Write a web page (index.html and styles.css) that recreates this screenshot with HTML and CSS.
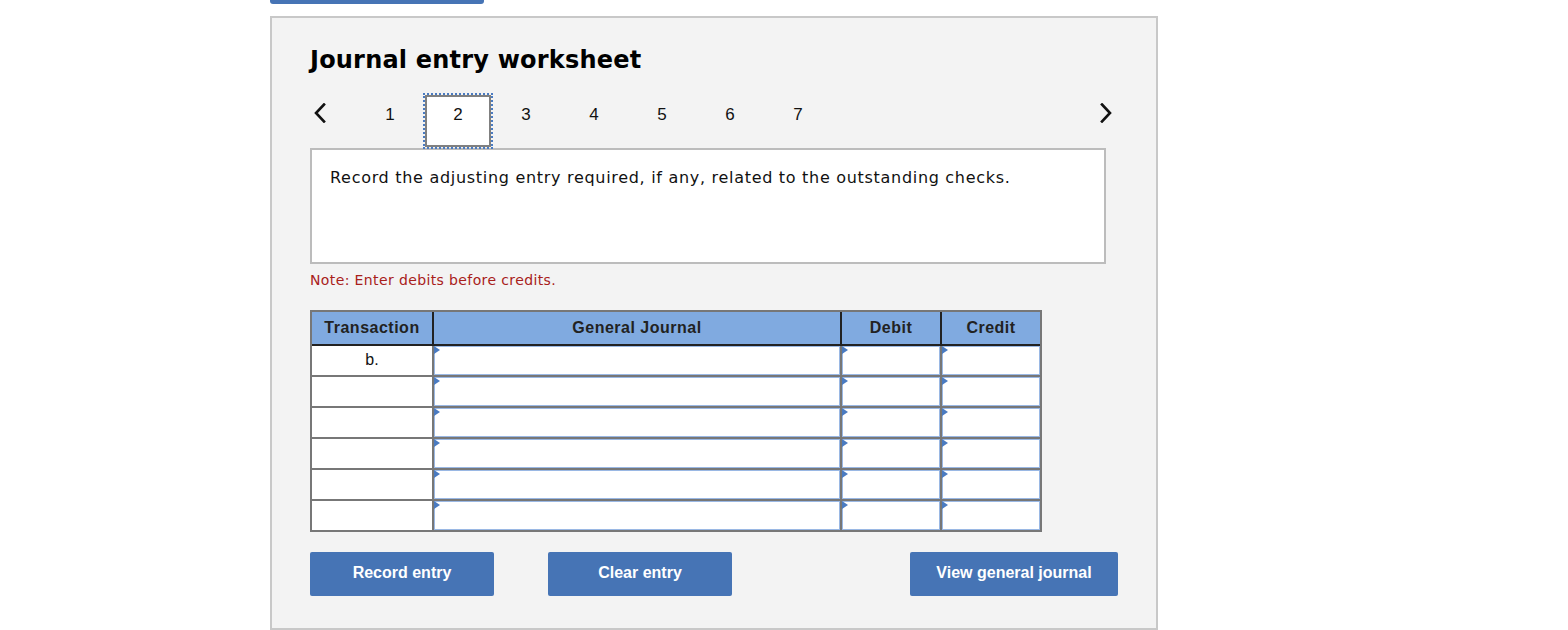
FILE: index.html
```html
<!DOCTYPE html>
<html>
<head>
<meta charset="utf-8">
<link rel="stylesheet" href="styles.css">
</head>
<body>
<div class="topbar"></div>
<div class="panel">
  <h1 class="title">Journal entry worksheet</h1>
  <div class="tabs">
    <div class="arrow prev">
      <svg width="12" height="20" viewBox="0 0 12 20"><polyline points="10,1.5 2,10 10,18.5" fill="none" stroke="#111" stroke-width="2.6" stroke-linecap="square"/></svg>
    </div>
    <div class="tab">1</div>
    <div class="tab active">2</div>
    <div class="tab">3</div>
    <div class="tab">4</div>
    <div class="tab">5</div>
    <div class="tab">6</div>
    <div class="tab">7</div>
    <div class="arrow next">
      <svg width="12" height="20" viewBox="0 0 12 20"><polyline points="2,1.5 10,10 2,18.5" fill="none" stroke="#111" stroke-width="2.6" stroke-linecap="square"/></svg>
    </div>
  </div>
  <div class="question">Record the adjusting entry required, if any, related to the outstanding checks.</div>
  <div class="note">Note: Enter debits before credits.</div>
  <div class="journal">
    <div class="head">
      <div class="hcell">Transaction</div>
      <div class="hcell">General Journal</div>
      <div class="hcell">Debit</div>
      <div class="hcell">Credit</div>
    </div>
    <div class="body">
      <div class="tcell">b.</div><div class="icell"></div><div class="icell"></div><div class="icell"></div>
      <div class="tcell"></div><div class="icell"></div><div class="icell"></div><div class="icell"></div>
      <div class="tcell"></div><div class="icell"></div><div class="icell"></div><div class="icell"></div>
      <div class="tcell"></div><div class="icell"></div><div class="icell"></div><div class="icell"></div>
      <div class="tcell"></div><div class="icell"></div><div class="icell"></div><div class="icell"></div>
      <div class="tcell"></div><div class="icell"></div><div class="icell"></div><div class="icell"></div>
    </div>
  </div>
  <div class="buttons">
    <button class="btn w184">Record entry</button>
    <button class="btn w184">Clear entry</button>
    <button class="btn w208 right">View general journal</button>
  </div>
</div>
</body>
</html>
```

FILE: styles.css
```css
html, body {
  margin: 0;
  padding: 0;
  background: #ffffff;
}
body {
  font-family: "DejaVu Sans", Verdana, sans-serif;
  color: #000;
  overflow: hidden;
}
.topbar {
  margin-left: 270px;
  width: 214px;
  height: 4px;
  background: #4674b5;
  border-radius: 0 0 3px 3px;
}
.panel {
  margin-top: 12px;
  margin-left: 270px;
  border: 2px solid #c8c8c8;
  background: #f3f3f3;
  padding: 28px 0 0 38px;
  box-sizing: border-box;
  width: 888px;
  height: 614px;
}
.title {
  margin: 0 0 18px 0;
  font-size: 24px;
  line-height: 29px;
  font-weight: bold;
  letter-spacing: 0.2px;
}
.tabs {
  display: flex;
  align-items: flex-start;
  height: 56px;
  width: 796px;
}
.arrow {
  display: flex;
  align-items: center;
  height: 20px;
  margin-top: 10px;
}
.arrow.prev {
  width: 46px;
  padding-left: 4px;
  box-sizing: border-box;
}
.arrow.next {
  margin-left: auto;
  margin-right: -6px;
}
.tab {
  width: 68px;
  padding-top: 11px;
  text-align: center;
  font-family: "Liberation Sans", Arial, sans-serif;
  font-size: 17px;
  line-height: 21px;
  color: #111;
}
.tab.active {
  position: relative;
  z-index: 1;
  box-sizing: border-box;
  width: 66px;
  height: 52px;
  margin: 2px 1px 0;
  padding-top: 7px;
  background: #fff;
  border: 2px solid #808080;
  outline: 2px dotted #4a7bc1;
}
.question {
  margin-top: -1px;
  width: 796px;
  height: 116px;
  box-sizing: border-box;
  border: 2px solid #bcbcbc;
  background: #fff;
  padding: 18px 18px;
  font-size: 16px;
  line-height: 20px;
  letter-spacing: 0.7px;
  color: #111;
}
.note {
  margin-top: 7px;
  font-size: 14px;
  line-height: 18px;
  letter-spacing: 0.38px;
  color: #a8201a;
}
.journal {
  margin-top: 21px;
  width: 732px;
  box-sizing: border-box;
  border: 2px solid #777;
  background: #777;
}
.head {
  display: grid;
  grid-template-columns: 120px 406px 98px 98px;
  column-gap: 2px;
  background: #222;
  border-bottom: 2px solid #222;
}
.hcell {
  height: 32px;
  background: #80aae0;
  color: #222;
  font-family: "Liberation Sans", Arial, sans-serif;
  font-weight: bold;
  font-size: 16px;
  line-height: 32px;
  text-align: center;
  letter-spacing: 0.5px;
}
.body {
  display: grid;
  grid-template-columns: 120px 406px 98px 98px;
  grid-auto-rows: 29px;
  gap: 2px;
  background: #777;
}
.tcell {
  background: #fff;
  font-family: "Liberation Sans", Arial, sans-serif;
  font-size: 16px;
  line-height: 28px;
  text-align: center;
  color: #111;
}
.icell {
  position: relative;
  background: #fff;
  border: 1px solid #9ab8e4;
}
.icell::before {
  content: "";
  position: absolute;
  left: -1px;
  top: -1px;
  width: 0;
  height: 0;
  border-top: 4px solid transparent;
  border-bottom: 4px solid transparent;
  border-left: 6px solid #4a7bc1;
}
.buttons {
  display: flex;
  margin-top: 20px;
  width: 808px;
}
.btn {
  height: 44px;
  border: none;
  border-radius: 2px;
  background: #4674b5;
  color: #fff;
  font-family: "Liberation Sans", Arial, sans-serif;
  font-weight: bold;
  font-size: 16px;
  line-height: 18px;
  padding: 0 0 2px 0;
  margin-right: 54px;
}
.w184 { width: 184px; }
.w208 { width: 208px; }
.btn.right {
  margin-left: auto;
  margin-right: 0;
}
```
